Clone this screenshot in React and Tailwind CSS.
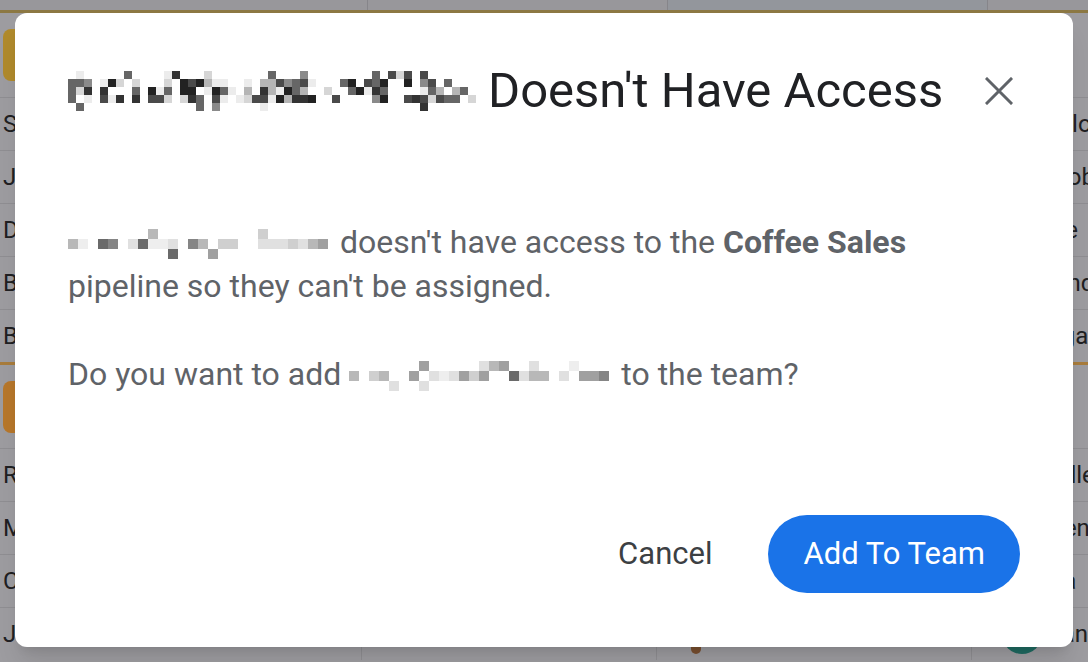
import React from 'react';

const font = { fontFamily: 'Roboto, "Noto Sans", Arial, sans-serif' };

// pixelated (redacted) name, drawn as a mosaic of grey squares
function Mosaic({ width, height = 32, cell = 8, seed = 1, tone = 'dark', density = 0.7 }) {
  let s = seed;
  const rand = () => {
    s = (s * 9301 + 49297) % 233280;
    return s / 233280;
  };
  const palettes = {
    dark: ['#222', '#333', '#4a4a4a', '#666', '#8a8a8a', '#b5b5b5', '#d6d6d6', '#ececec'],
    light: ['#6a6a6a', '#858585', '#a0a0a0', '#b8b8b8', '#cfcfcf', '#e0e0e0', '#eeeeee'],
  };
  const pal = palettes[tone];
  const cols = Math.floor(width / cell);
  const rows = Math.floor(height / cell);
  const rects = [];
  for (let c = 0; c < cols; c++) {
    const gap = c > 0 && rand() < 0.14;
    for (let r = 0; r < rows; r++) {
      const mid = r >= 1 && r <= rows - 2;
      const p = c === 0 ? (mid ? 1 : 0) : mid ? (gap ? 0.08 : density) : 0.12;
      if (rand() < p) {
        const col = c === 0 ? pal[3] : pal[Math.floor(rand() * pal.length)];
        rects.push(<rect key={c + '-' + r} x={c * cell} y={r * cell} width={cell} height={cell} fill={col} />);
      }
    }
  }
  return (
    <svg width={width} height={height} viewBox={`0 0 ${width} ${height}`} className="inline-block shrink-0">
      {rects}
    </svg>
  );
}

const rowsTop = [
  { l: 'Sarah Kim', r: 'Mark Mallory' },
  { l: 'James Lee', r: 'Jack Jacobs' },
  { l: 'David Cole', r: 'Sara Lane' },
  { l: 'Ben Ortiz', r: 'Kyle Ryland' },
  { l: 'Beth Moss', r: 'Tim Morgan' },
];
const rowsBottom = [
  { l: 'Rosa Diaz', r: 'Lisa Sandler' },
  { l: 'Mia Lopez', r: 'Mo Mickens' },
  { l: 'Chris Ray', r: 'Eli Olivera' },
];

function Row({ l, r }) {
  return (
    <div className="flex h-[53px] border-t border-[#8f8e92] text-[24px] text-[#202022]">
      <div className="w-[368px] flex items-center pl-[3px] border-r border-[#8f8e92]">{l}</div>
      <div className="w-[300px] border-r border-[#8f8e92]" />
      <div className="w-[320px] border-r border-[#8f8e92]" />
      <div className="flex-1 flex items-center pl-[4px] whitespace-nowrap overflow-hidden">
        <span className="ml-[-20px]">{r}</span>
      </div>
    </div>
  );
}

function Background() {
  return (
    <div className="flex flex-col h-[662px] w-full bg-[#9d9ca0] overflow-hidden" style={font}>
      <div className="flex h-[10px] bg-[#98979b]">
        <div className="w-[368px] border-r border-[#86858a]" />
        <div className="w-[300px] border-r border-[#86858a]" />
        <div className="w-[320px] bg-[#93969c] border-r border-[#86858a]" />
        <div className="flex-1" />
      </div>
      <div className="h-[3px] bg-[#8c7843]" />
      <div className="h-[84px] flex items-center pl-[3px]">
        <div className="w-[40px] h-[52px] rounded-[8px] bg-[#b08a2c]" />
      </div>
      {rowsTop.map((r) => (
        <Row key={r.l} {...r} />
      ))}
      <div className="h-[3px] bg-[#a87c3c]" />
      <div className="h-[83px] flex items-center pl-[3px]">
        <div className="w-[40px] h-[52px] rounded-[8px] bg-[#b7772b]" />
      </div>
      {rowsBottom.map((r) => (
        <Row key={r.l} {...r} />
      ))}
      <div className="flex h-[53px] border-t border-[#8f8e92] text-[24px] text-[#202022]">
        <div className="w-[368px] flex items-center pl-[3px] border-r border-[#8f8e92]">Jena Rouse</div>
        <div className="w-[300px] flex items-center gap-3 pl-[16px] border-r border-[#8f8e92]">
          <div className="w-[24px] h-[24px] rounded bg-[#a98a3a]" />
          <span>Contacted</span>
        </div>
        <div className="w-[320px] flex items-center gap-3 pl-[34px] border-r border-[#8f8e92]">
          <div className="w-[10px] h-[40px] rounded-full bg-[#7a5030]" />
          <span>Kanu S</span>
        </div>
        <div className="flex-1 flex items-center gap-1 pl-[30px]">
          <div className="w-[40px] h-[40px] rounded-full bg-[#1f6b62] shrink-0" />
          <span>Dan</span>
        </div>
      </div>
    </div>
  );
}

export default function App() {
  return (
    <div className="relative w-[1088px] h-[662px] overflow-hidden">
      <Background />

      {/* Dialog */}
      <div className="absolute inset-0 flex items-start justify-center pt-[13px]">
        <div
          className="w-[1058px] h-[634px] bg-white rounded-[12px] shadow-xl flex flex-col px-[53px] pt-[48px] pb-[54px]"
          style={font}
        >
          {/* Header */}
          <div className="flex items-center justify-between">
            <h2 className="flex items-center gap-[12px] text-[49px] leading-[60px] text-[#202124] font-normal whitespace-nowrap">
              <Mosaic width={408} height={40} cell={8} seed={7} tone="dark" density={0.62} />
              <span>Doesn't Have Access</span>
            </h2>
            <button className="w-[28px] h-[28px] mr-[7px] flex items-center justify-center">
              <svg width="28" height="28" viewBox="0 0 28 28">
                <path d="M2 2 L26 26 M26 2 L2 26" stroke="#5f6368" strokeWidth="3" strokeLinecap="square" />
              </svg>
            </button>
          </div>

          {/* Body */}
          <div className="mt-[99px] text-[32px] leading-[44px] text-[#5f6368] whitespace-nowrap">
            <p>
              <span className="inline-block align-middle mr-[12px] -mt-[6px]">
                <Mosaic width={260} height={30} cell={10} seed={3} tone="light" density={0.75} />
              </span>
              doesn't have access to the <span className="font-bold">Coffee Sales</span>
              <br />
              pipeline so they can't be assigned.
            </p>
            <p className="mt-[44px]">
              Do you want to add
              <span className="inline-block align-middle mx-[8px] -mt-[6px]">
                <Mosaic width={264} height={30} cell={10} seed={11} tone="light" density={0.75} />
              </span>
              to the team?
            </p>
          </div>

          {/* Actions */}
          <div className="mt-auto flex items-center justify-end gap-[56px]">
            <button className="text-[31px] font-normal text-[#3c4043]">Cancel</button>
            <button className="h-[78px] px-[35px] rounded-full bg-[#1a73e8] text-white text-[31px] font-normal">
              Add To Team
            </button>
          </div>
        </div>
      </div>
    </div>
  );
}
